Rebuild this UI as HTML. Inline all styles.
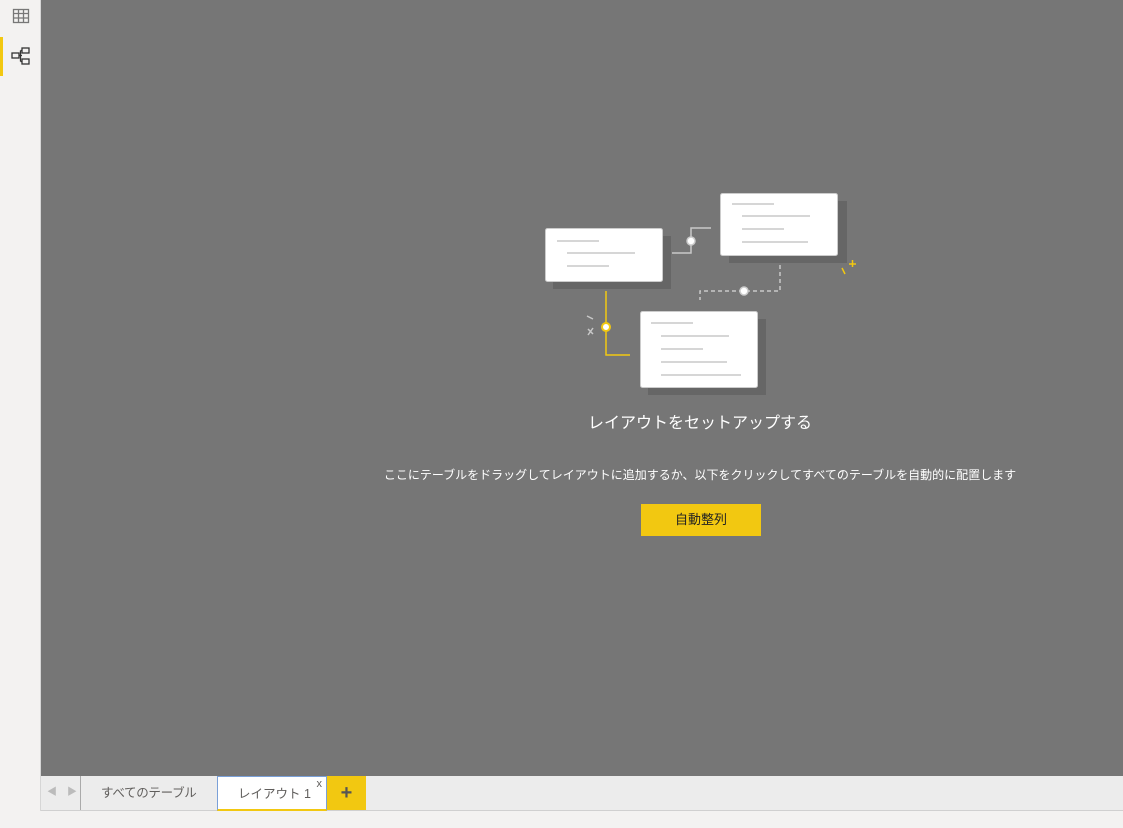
<!DOCTYPE html>
<html><head><meta charset="utf-8"><style>
body{margin:0;width:1123px;height:828px;overflow:hidden;background:#f3f2f1;font-family:"Liberation Sans","Noto Sans CJK JP",sans-serif;position:relative}
.side{position:absolute;left:0;top:0;width:40px;height:811px;background:#f3f2f1;border-right:1px solid #d6d6d6}
.main{position:absolute;left:41px;top:0;width:1082px;height:776px;background:#767676}
.tabs{position:absolute;left:41px;top:776px;width:1082px;height:34px;background:#ececec;border-bottom:1px solid #d0d0d0}
.t{position:absolute;top:0;height:34px;line-height:34px;font-size:13px;color:#605e5c}
</style></head><body>
<div class="side">
<svg style="position:absolute;left:12px;top:8px" width="18" height="16"><rect x="1.5" y="1.5" width="15" height="13" fill="none" stroke="#777" stroke-width="1.3"/><path d="M1.5 5.5H16.5M1.5 10H16.5M6.5 1.5V14.5M11.5 1.5V14.5" stroke="#777" stroke-width="1.3"/></svg>
<div style="position:absolute;left:0;top:37px;width:3px;height:39px;background:#f2c811"></div>
<svg style="position:absolute;left:11px;top:47px" width="20" height="20"><g fill="none" stroke="#333" stroke-width="1.3"><rect x="1" y="6" width="7" height="5"/><rect x="11" y="1" width="7" height="5"/><rect x="11" y="12" width="7" height="5"/><path d="M8 8.5H11M9.5 3.5V14.5M9.5 3.5H11M9.5 14.5H11"/></g></svg>
</div>
<div class="main">
<svg style="position:absolute;left:489px;top:185px" width="340" height="215" viewBox="530 185 340 215">
<rect x="553" y="236" width="118" height="53" fill="#666"/>
<rect x="729" y="201" width="118" height="62" fill="#666"/>
<rect x="648" y="319" width="118" height="76" fill="#666"/>
<rect x="545.5" y="228.5" width="117" height="53" rx="2" fill="#fff" stroke="#ccc"/>
<rect x="720.5" y="193.5" width="117" height="62" rx="2" fill="#fff" stroke="#ccc"/>
<rect x="640.5" y="311.5" width="117" height="76" rx="2" fill="#fff" stroke="#ccc"/>
<g stroke="#c8c8c8" stroke-width="1.5">
<path d="M557 241H599M567 253H635M567 266H609"/>
<path d="M732 204H774M742 216H810M742 229H784M742 242H808"/>
<path d="M651 323H693M661 336H729M661 349H703M661 362H727M661 375H741"/>
<path d="M672 253H691V228H711" fill="none"/>
<path d="M780 265V291H700V300" fill="none" stroke-dasharray="4 3"/>
<path d="M587 316L593 319M588 329L593 334M593 328L588 335"/>
</g>
<circle cx="691" cy="241" r="4" fill="#fff" stroke="#ccc" stroke-width="1.5"/>
<circle cx="744" cy="291" r="4" fill="#fff" stroke="#ccc" stroke-width="1.5"/>
<path d="M606 291V355H630" fill="none" stroke="#f2c811" stroke-width="1.5"/>
<circle cx="606" cy="327" r="4" fill="#fff" stroke="#f2c811" stroke-width="2"/>
<path d="M842 268L845 274M849 264H856M852.5 260V267" stroke="#f2c811" stroke-width="1.5"/>
</svg>
<div style="position:absolute;left:0;width:1318px;top:409px;text-align:center;color:#fff;font-size:16px">レイアウトをセットアップする</div>
<div style="position:absolute;left:0;width:1318px;top:466px;text-align:center;color:#fff;font-size:12px">ここにテーブルをドラッグしてレイアウトに追加するか、以下をクリックしてすべてのテーブルを自動的に配置します</div>
<div style="position:absolute;left:600px;top:504px;width:120px;height:32px;background:#f2c811;color:#222;font-size:13px;line-height:32px;text-align:center">自動整列</div>
</div>
<div class="tabs">
<div class="t" style="left:6px;color:#bbb;font-size:10px">◀</div><div class="t" style="left:26px;color:#bbb;font-size:10px">▶</div>
<div style="position:absolute;left:39px;top:0;width:1px;height:34px;background:#aaa"></div>
<div class="t" style="left:60px;font-size:12.5px;letter-spacing:-0.3px">すべてのテーブル</div>
<div class="t" style="left:176px;background:#fff;border:1px solid #7aa0d8;border-bottom:2px solid #f2c811;box-sizing:border-box;width:110px;height:35px;padding-left:20px;font-size:12.5px">レイアウト 1<span style="position:absolute;right:4px;top:-10px;font-size:11px">x</span></div>
<div style="position:absolute;left:286px;top:0;width:39px;height:34px;background:#f2c811;color:#555;font-size:20px;font-weight:bold;text-align:center;line-height:34px">+</div>
</div>
</body></html>
